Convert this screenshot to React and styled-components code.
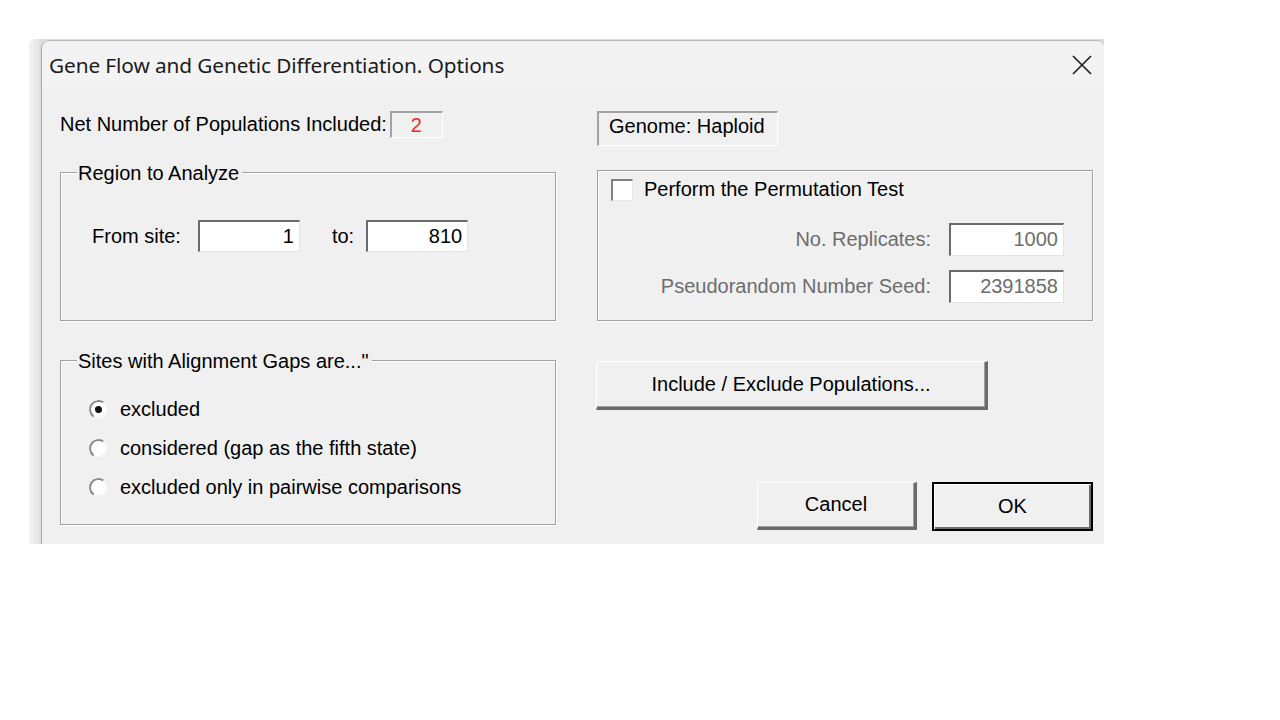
import styled, { createGlobalStyle } from "styled-components";

const GlobalStyle = createGlobalStyle`
  html, body {
    margin: 0;
    padding: 0;
    background: #ffffff;
  }
  body {
    font-family: "Liberation Sans", Arial, sans-serif;
    font-size: 20px;
    color: #000;
  }
`;

const Page = styled.div`
  width: 1280px;
  height: 720px;
  box-sizing: border-box;
  padding: 39px 0 0 29px;
`;

const Shadow = styled.div`
  width: 1075px;
  height: 505px;
  box-sizing: border-box;
  padding: 1px 0 0 12px;
  display: flex;
  background: linear-gradient(90deg, #f3f3f3 0px, #e6e6e6 9px, #dcdcdc 12px);
  border-top-left-radius: 6px;
`;

const Window = styled.div`
  flex: 1;
  display: flex;
  flex-direction: column;
  background: #f0f0f0;
  border-top: 1px solid #b9b9b9;
  border-left: 1px solid #a8a8a8;
  border-top-left-radius: 9px;
  border-top-right-radius: 7px;
  overflow: hidden;
`;

const TitleBar = styled.div`
  height: 47px;
  flex: none;
  display: flex;
  align-items: center;
  justify-content: space-between;
  padding: 0 12px 0 7px;
  background: #f3f3f3;
`;

const Title = styled.span`
  font-family: "Noto Sans", "Liberation Sans", sans-serif;
  font-size: 20.8px;
  color: #1b1b1b;
  letter-spacing: -0.1px;
`;

const Close = styled.svg`
  width: 20px;
  height: 20px;
  margin-top: 1px;
`;

const Body = styled.div`
  display: flex;
  flex-direction: column;
  padding: 23px 0 0 18px;
`;

const Row = styled.div`
  display: grid;
  grid-template-columns: 496px 496px;
  column-gap: 41px;
  align-items: ${(p) => p.$align || "start"};
  margin-top: ${(p) => p.$top || 0}px;
`;

const Inline = styled.div`
  display: flex;
  align-items: center;
  gap: ${(p) => p.$gap || 0}px;
`;

const Label = styled.span`
  white-space: nowrap;
  color: ${(p) => (p.$disabled ? "#6d6d6d" : "#000")};
`;

const CountBox = styled.div`
  width: 53px;
  height: 27px;
  box-sizing: border-box;
  margin-left: 3px;
  display: flex;
  align-items: center;
  justify-content: center;
  border-style: solid;
  border-width: 2px 1px 1px 2px;
  border-color: #a3a3a3 #ffffff #ffffff #a3a3a3;
  color: #f02828;
  padding-right: 1px;
`;

const GenomeBox = styled.div`
  width: 181px;
  height: 35px;
  box-sizing: border-box;
  display: flex;
  align-items: center;
  padding: 0 0 5px 10px;
  border-style: solid;
  border-width: 2px 1px 1px 2px;
  border-color: #a3a3a3 #ffffff #ffffff #a3a3a3;
`;

const Group = styled.div`
  position: relative;
  box-sizing: border-box;
  height: ${(p) => p.$height}px;
  border: 1px solid #a0a0a0;
  box-shadow: inset 1px 1px 0 #ffffff, 1px 1px 0 #ffffff;
  padding: ${(p) => p.$pad};
`;

const Legend = styled.span`
  position: absolute;
  top: -11px;
  left: 16px;
  padding: 0 3px 0 1px;
  line-height: 22px;
  background: #f0f0f0;
  white-space: nowrap;
`;

const Field = styled.div`
  box-sizing: border-box;
  width: ${(p) => p.$width}px;
  height: ${(p) => p.$height || 32}px;
  display: flex;
  align-items: center;
  justify-content: flex-end;
  padding: 0 5px 1px 0;
  background: #ffffff;
  border-style: solid;
  border-width: 2px 1px 1px 2px;
  border-color: #6a6a6a #e3e3e3 #e3e3e3 #6a6a6a;
  color: ${(p) => (p.$disabled ? "#6d6d6d" : "#000")};
`;

const Check = styled.span`
  width: 22px;
  height: 22px;
  box-sizing: border-box;
  background: #ffffff;
  border-style: solid;
  border-width: 2px 1px 1px 2px;
  border-color: #808080 #e6e6e6 #e6e6e6 #808080;
`;

const FieldRow = styled.div`
  display: flex;
  align-items: center;
  justify-content: flex-end;
  gap: 18px;
  padding-right: 28px;
  margin-top: ${(p) => p.$top}px;
`;

const RadioList = styled.div`
  display: flex;
  flex-direction: column;
  gap: 16px;
`;

const Radio = styled.span`
  position: relative;
  width: 19px;
  height: 19px;
  box-sizing: border-box;
  border-radius: 50%;
  background: #ffffff;
  border: 2px solid;
  border-color: #8a8a8a #f4f4f4 #f4f4f4 #8a8a8a;
  transform: rotate(-10deg);

  &::after {
    content: "";
    display: ${(p) => (p.$checked ? "block" : "none")};
    position: absolute;
    left: 4px;
    top: 4px;
    width: 7px;
    height: 7px;
    border-radius: 50%;
    background: #111;
  }
`;

const RightStack = styled.div`
  display: flex;
  flex-direction: column;
  padding-top: 1px;
`;

const Button = styled.div`
  box-sizing: border-box;
  width: ${(p) => p.$width}px;
  height: ${(p) => p.$height}px;
  display: flex;
  align-items: center;
  justify-content: center;
  padding-bottom: 1px;
  background: #f0f0f0;
  border-style: solid;
  border-width: ${(p) => (p.$default ? "2px" : "1px 3px 3px 1px")};
  border-color: ${(p) =>
    p.$default ? "#000" : "#ffffff #6a6a6a #6a6a6a #ffffff"};
  box-shadow: ${(p) =>
    p.$default
      ? "inset 1px 1px 0 #ffffff, inset -2px -2px 0 #6a6a6a"
      : "inset -1px -1px 0 #a0a0a0"};
  white-space: nowrap;
`;

const ButtonBar = styled.div`
  display: flex;
  justify-content: flex-end;
  gap: 15px;
  margin-top: 72px;
`;

export default function App() {
  return (
    <Page>
      <GlobalStyle />
      <Shadow>
        <Window>
          <TitleBar>
            <Title>Gene Flow and Genetic Differentiation. Options</Title>
            <Close viewBox="0 0 20 20">
              <path
                d="M1 1 L19 19 M19 1 L1 19"
                stroke="#222"
                strokeWidth="1.7"
                fill="none"
              />
            </Close>
          </TitleBar>
          <Body>
            <Row>
              <Inline>
                <Label>Net Number of Populations Included:</Label>
                <CountBox>2</CountBox>
              </Inline>
              <GenomeBox>Genome: Haploid</GenomeBox>
            </Row>

            <Row $top={24} $align="end">
              <Group $height={149} $pad="47px 0 0 31px">
                <Legend>Region to Analyze</Legend>
                <Inline>
                  <Label>From site:</Label>
                  <Field $width={102} style={{ marginLeft: 17 }}>
                    1
                  </Field>
                  <Label style={{ marginLeft: 32 }}>to:</Label>
                  <Field $width={102} style={{ marginLeft: 12 }}>
                    810
                  </Field>
                </Inline>
              </Group>
              <Group $height={151} $pad="7px 0 0 13px">
                <Inline $gap={11}>
                  <Check />
                  <Label>Perform the Permutation Test</Label>
                </Inline>
                <FieldRow $top={22}>
                  <Label $disabled>No. Replicates:</Label>
                  <Field $width={115} $height={33} $disabled>
                    1000
                  </Field>
                </FieldRow>
                <FieldRow $top={14}>
                  <Label $disabled>Pseudorandom Number Seed:</Label>
                  <Field $width={115} $height={33} $disabled>
                    2391858
                  </Field>
                </FieldRow>
              </Group>
            </Row>

            <Row $top={39}>
              <Group $height={165} $pad="37px 0 0 28px">
                <Legend>Sites with Alignment Gaps are..."</Legend>
                <RadioList>
                  <Inline $gap={12}>
                    <Radio $checked />
                    <Label>excluded</Label>
                  </Inline>
                  <Inline $gap={12}>
                    <Radio />
                    <Label>considered (gap as the fifth state)</Label>
                  </Inline>
                  <Inline $gap={12}>
                    <Radio />
                    <Label>excluded only in pairwise comparisons</Label>
                  </Inline>
                </RadioList>
              </Group>
              <RightStack>
                <Button $width={392} $height={49} style={{ marginLeft: -1 }}>
                  Include / Exclude Populations...
                </Button>
                <ButtonBar>
                  <Button $width={160} $height={48}>
                    Cancel
                  </Button>
                  <Button $width={161} $height={49} $default>
                    OK
                  </Button>
                </ButtonBar>
              </RightStack>
            </Row>
          </Body>
        </Window>
      </Shadow>
    </Page>
  );
}
